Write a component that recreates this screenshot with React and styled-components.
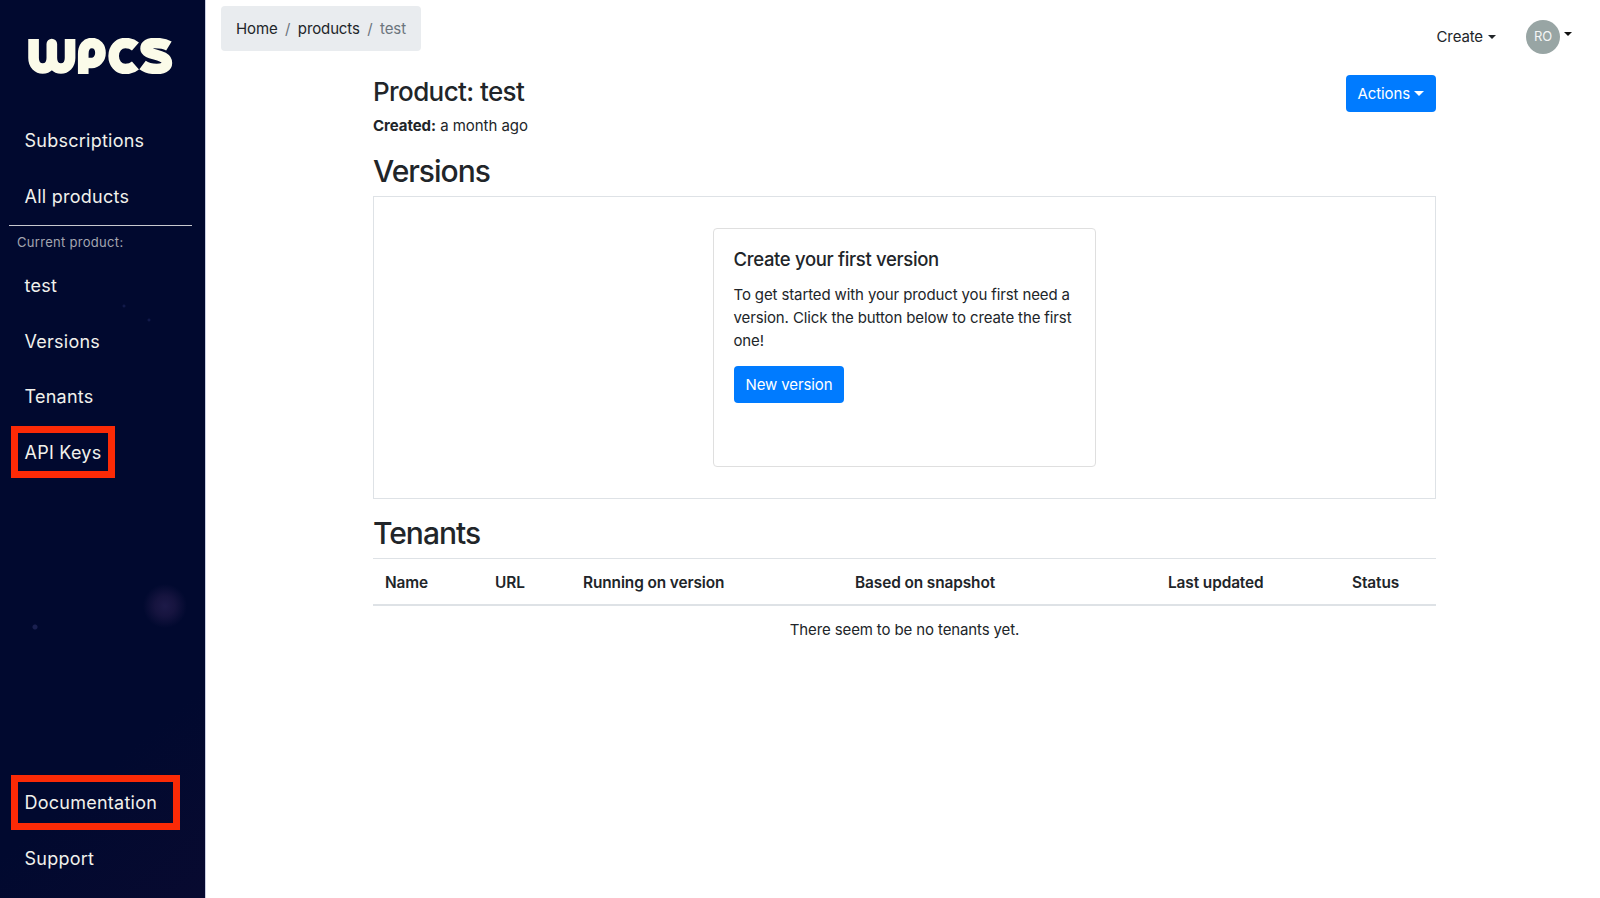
import React from 'react';
import styled, { createGlobalStyle } from 'styled-components';

const GlobalStyle = createGlobalStyle`
    html, body {
        margin: 0;
        padding: 0;
        background: #fff;
    }
    * {
        box-sizing: border-box;
    }
    body {
        font-family: Inter, "Liberation Sans", sans-serif;
        font-size: 15px;
        line-height: 23px;
        letter-spacing: -0.12px;
        color: #212529;
    }
`;

const Page = styled.div`
    display: flex;
    width: 1600px;
    height: 898px;
    overflow: hidden;
`;

const Sidebar = styled.aside`
    width: 206px;
    height: 100%;
    flex-shrink: 0;
    display: flex;
    flex-direction: column;
    padding: 38px 0 12px;
    border-right: 1px solid #c9cde0;
    background:
        radial-gradient(circle at 165px 606px, #1d1a48 0, #16143f 10px, rgba(18, 16, 60, 0) 22px),
        radial-gradient(circle at 35px 627px, #1a2050 0, #1a2050 2px, rgba(2, 10, 52, 0) 3px),
        radial-gradient(circle at 124px 306px, #1a2258 0, rgba(2, 10, 52, 0) 2px),
        radial-gradient(circle at 149px 320px, #1a2258 0, rgba(2, 10, 52, 0) 2px),
        linear-gradient(140deg, #01092f 0%, #01092f 80%, #080a30 100%);
`;

const Logo = styled.svg`
    display: block;
    width: 148px;
    height: 36px;
    margin: 0 0 39px 28px;
`;

const NavLink = styled.a`
    position: relative;
    display: flex;
    align-items: center;
    height: 55.4px;
    padding-left: 24.5px;
    font-family: Inter, "Open Sans", sans-serif;
    font-size: 18px;
    letter-spacing: 0.25px;
    color: #f1f1ec;
`;

const Highlight = styled.span`
    position: absolute;
    left: 11px;
    top: ${(p) => p.$top}px;
    width: ${(p) => p.$width}px;
    height: ${(p) => p.$height}px;
    border: 7px solid #fb2a06;
`;

const Divider = styled.hr`
    margin: 1px 13px 0 9px;
    border: 0;
    border-top: 1px solid #c8c9cf;
`;

const NavCaption = styled.div`
    padding: 6px 0 4px 17px;
    height: 32.5px;
    font-family: Inter, "Open Sans", sans-serif;
    font-size: 13px;
    line-height: 21px;
    letter-spacing: 0.3px;
    color: #a4a6b0;
`;

const NavBottom = styled.div`
    margin-top: auto;
`;

const Main = styled.main`
    flex: 1;
    display: flex;
    flex-direction: column;
    min-width: 0;
`;

const TopBar = styled.header`
    display: flex;
    align-items: flex-start;
    justify-content: space-between;
    height: 70px;
    padding: 6px 0 0 15px;
`;

const Breadcrumb = styled.nav`
    display: flex;
    align-items: center;
    height: 45px;
    padding: 0 15px;
    background: #e9ecef;
    border-radius: 4px;
`;

const Crumb = styled.span`
    color: ${(p) => (p.$active ? '#6c757d' : '#212529')};
`;

const Slash = styled.span`
    margin: 0 7.5px;
    color: #6c757d;
`;

const TopActions = styled.div`
    display: flex;
    align-items: center;
    height: 61px;
    margin-top: -6px;
    padding-top: 12px;
`;

const CreateToggle = styled.span`
    display: flex;
    align-items: center;
    gap: 5px;
    margin-right: 30px;
`;

const Caret = styled.span`
    display: inline-block;
    border-top: ${(p) => p.$size || 4}px solid ${(p) => p.$color || '#212529'};
    border-left: ${(p) => p.$size || 4}px solid transparent;
    border-right: ${(p) => p.$size || 4}px solid transparent;
`;

const Avatar = styled.span`
    display: flex;
    align-items: center;
    justify-content: center;
    width: 34px;
    height: 34px;
    border-radius: 50%;
    background: #98a5a4;
    color: #f4f6f6;
    font-size: 13px;
    margin-right: 4px;
`;

const AvatarCaret = styled.span`
    display: flex;
    margin: -6px 28px 0 0;
`;

const Content = styled.section`
    width: 1063px;
    margin-left: 167px;
`;

const TitleRow = styled.div`
    display: flex;
    align-items: flex-start;
    justify-content: space-between;
`;

const ProductTitle = styled.h3`
    margin: 6px 0 0;
    font-size: 26px;
    line-height: 32px;
    font-weight: 500;
    letter-spacing: -0.6px;
`;

const Created = styled.p`
    margin: 6px 0 0;
    letter-spacing: -0.05px;
`;

const Button = styled.button`
    display: inline-flex;
    align-items: center;
    height: 37px;
    padding: 0 12px;
    border: 0;
    border-radius: 4px;
    background: #007bff;
    color: #fff;
    font: inherit;
    letter-spacing: inherit;
`;

const ActionsButton = styled(Button)`
    gap: 4px;
    margin-top: 4.5px;
`;

const SectionTitle = styled.h2`
    margin: ${(p) => p.$top}px 0 0;
    font-size: 30px;
    line-height: 37px;
    font-weight: 500;
    letter-spacing: -1px;
`;

const VersionsBox = styled.div`
    display: flex;
    justify-content: center;
    height: 303px;
    margin-top: 6px;
    padding-top: 31px;
    border: 1px solid #dee2e6;
`;

const Card = styled.div`
    width: 383px;
    height: 239px;
    padding: 19px 19.5px;
    border: 1px solid #dfdfdf;
    border-radius: 4px;
`;

const CardTitle = styled.h5`
    margin: 0 0 12px;
    font-size: 18.5px;
    line-height: 23px;
    font-weight: 500;
    letter-spacing: -0.34px;
`;

const CardText = styled.p`
    margin: 0 0 14px;
`;

const Table = styled.table`
    width: 100%;
    margin-top: 6px;
    border-collapse: collapse;
    table-layout: fixed;
`;

const HeadCell = styled.th`
    width: ${(p) => p.$width}px;
    height: 46px;
    padding: 2px 12px 0;
    border-top: 1px solid #dee2e6;
    border-bottom: 2px solid #dee2e6;
    text-align: left;
    font-size: 15.4px;
    font-weight: 600;
    letter-spacing: -0.1px;
`;

const EmptyCell = styled.td`
    padding: 12px;
    text-align: center;
`;

const navTop = ['Subscriptions', 'All products'];
const navProduct = ['test', 'Versions', 'Tenants'];
const columns = [
    ['Name', 110],
    ['URL', 88],
    ['Running on version', 272],
    ['Based on snapshot', 313],
    ['Last updated', 184],
    ['Status', 96],
];

const WpcsLogo = () => (
    <Logo viewBox="0 0 146 36" preserveAspectRatio="none" fill="none" stroke="#fbfbe9" strokeWidth="10.5" strokeLinecap="butt" strokeLinejoin="round">
        <path d="M5.5 1V20C5.5 34 23.5 34 23.5 20V6V20C23.5 34 41.5 34 41.5 20V1" />
        <path d="M54.5 36V16C54.5 9 58 5 63 5S71.5 9 71.5 15S67 25 63 25H56" />
        <path d="M106 8.5C102 5 99 5 96 5C89 5 84.5 11 84.5 18S89 31 96 31C99 31 102 31 106 27.5" />
        <path d="M139 8C134 5 129 5 125 5C119 5 116 7 116 10.5C116 18 137 15 137 25C137 29 133 31 127 31C122 31 117 30 113 27" />
    </Logo>
);

export default function App() {
    return (
        <Page>
            <GlobalStyle />
            <Sidebar>
                <WpcsLogo />
                {navTop.map((item) => <NavLink key={item}>{item}</NavLink>)}
                <Divider />
                <NavCaption>Current product:</NavCaption>
                {navProduct.map((item) => <NavLink key={item}>{item}</NavLink>)}
                <NavLink>
                    API Keys
                    <Highlight $top={2} $width={104} $height={52} />
                </NavLink>
                <NavBottom>
                    <NavLink>
                        Documentation
                        <Highlight $top={0} $width={169} $height={55} />
                    </NavLink>
                    <NavLink>Support</NavLink>
                </NavBottom>
            </Sidebar>
            <Main>
                <TopBar>
                    <Breadcrumb>
                        <Crumb>Home</Crumb>
                        <Slash>/</Slash>
                        <Crumb>products</Crumb>
                        <Slash>/</Slash>
                        <Crumb $active>test</Crumb>
                    </Breadcrumb>
                    <TopActions>
                        <CreateToggle>Create <Caret /></CreateToggle>
                        <Avatar>RO</Avatar>
                        <AvatarCaret><Caret $size={4.5} $color="#111" /></AvatarCaret>
                    </TopActions>
                </TopBar>
                <Content>
                    <TitleRow>
                        <div>
                            <ProductTitle>Product: test</ProductTitle>
                            <Created><strong>Created:</strong> a month ago</Created>
                        </div>
                        <ActionsButton>Actions <Caret $size={5} $color="#fff" /></ActionsButton>
                    </TitleRow>
                    <SectionTitle $top={16}>Versions</SectionTitle>
                    <VersionsBox>
                        <Card>
                            <CardTitle>Create your first version</CardTitle>
                            <CardText>To get started with your product you first need a version. Click the button below to create the first one!</CardText>
                            <Button>New version</Button>
                        </Card>
                    </VersionsBox>
                    <SectionTitle $top={16}>Tenants</SectionTitle>
                    <Table>
                        <thead>
                            <tr>
                                {columns.map(([name, width]) => <HeadCell key={name} $width={width}>{name}</HeadCell>)}
                            </tr>
                        </thead>
                        <tbody>
                            <tr>
                                <EmptyCell colSpan={6}>There seem to be no tenants yet.</EmptyCell>
                            </tr>
                        </tbody>
                    </Table>
                </Content>
            </Main>
        </Page>
    );
}
